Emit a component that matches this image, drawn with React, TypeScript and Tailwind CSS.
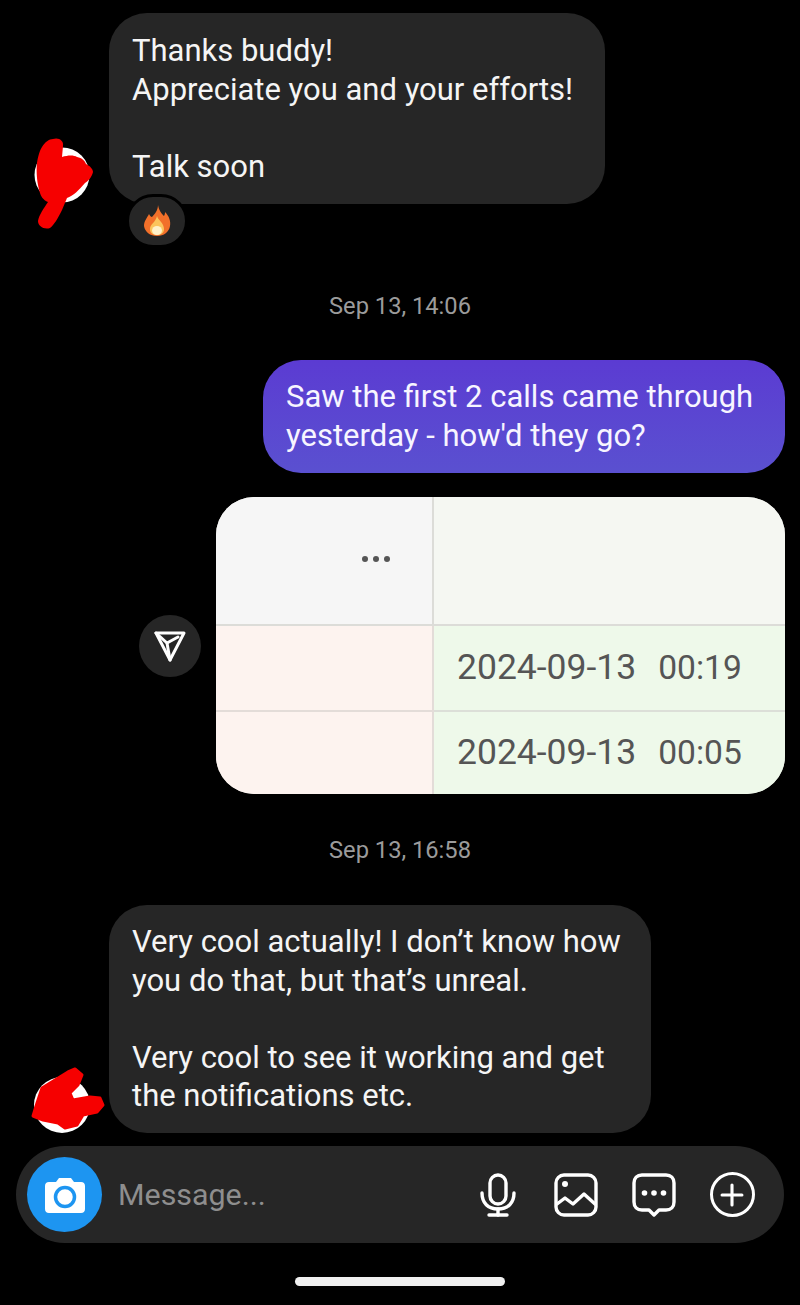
import { Plus } from 'lucide-react'

function ScribbleTop() {
  return (
    <svg width="66" height="100" viewBox="0 0 66 100" className="block">
      <circle cx="32" cy="45" r="27.5" fill="#fff" />
      <path
        d="M23 9 C29 7 34 11 33 16 L32 27 C38 25 44 25 47 27 C52 28 55 31 56 34 C60 36 63 39 63 42 C62 47 58 51 55 53 C49 60 43 66 37 68 L32 80 C28 88 24 95 20 98 C14 100 8 96 8 91 C9 85 14 78 18 72 C13 70 11 66 10 63 C7 54 6 42 7 33 C8 26 10 20 12 17 C15 12 19 9 23 9 Z"
        fill="#f60000"
      />
    </svg>
  )
}

function ScribbleBottom() {
  return (
    <svg width="76" height="74" viewBox="0 0 76 74" className="block">
      <circle cx="32" cy="40" r="28" fill="#fff" />
      <path
        d="M45 4 L52 10 L48 20 L40 28 L43 35 L60 32 L70 33 L73 40 L67 47 L53 50 L47 60 L35 63 L28 58 L13 55 L3 51 L7 38 L12 23 L25 15 L38 7 Z"
        fill="#f60000"
        stroke="#f60000"
        strokeWidth="3"
        strokeLinejoin="round"
      />
    </svg>
  )
}

function Flame() {
  return (
    <svg width="28" height="32" viewBox="0 0 28 32">
      <path d="M15 0 C16 6 19 9 21 11 C22 9 22 8 22 7 C26 11 28 16 27 21 C26 27 21 31 14 31 C7 31 2 27 1 21 C1 16 4 13 6 9 C7 11 8 12 9 12 C12 9 15 5 15 0 Z" fill="#f2702a" />
      <path d="M14 11 C15 15 21 18 21 24 C21 28 18 30 14 30 C10 30 7 28 7 24 C7 19 13 17 14 11 Z" fill="#fbc45c" />
      <ellipse cx="14" cy="25.5" rx="5" ry="4.5" fill="#fff1c9" />
    </svg>
  )
}

function Timestamp({ text }: { text: string }) {
  return <div className="text-center text-[23.7px] leading-[30px] text-[#9b9b9b]">{text}</div>
}

function App() {
  return (
    <div className="w-[800px] h-[1305px] overflow-hidden bg-black text-white font-['Roboto',sans-serif] flex flex-col pt-[13px]">
      {/* first message */}
      <div className="flex items-start pl-[30px] shrink-0">
        <div className="w-[79px] shrink-0 pt-[117px]">
          <ScribbleTop />
        </div>
        <div className="relative w-[496px] h-[191px] rounded-[38px] bg-[#262626] pl-[23px] pt-[19px] text-[31px] leading-[38.5px] text-[#f5f5f5]">
          Thanks buddy!
          <br />
          Appreciate you and your efforts!
          <br />
          <br />
          Talk soon
          <div className="absolute left-[17px] top-[181px] w-[62px] h-[54px] rounded-full bg-[#262626] border-[3px] border-black flex items-center justify-center">
            <Flame />
          </div>
        </div>
      </div>

      <div className="mt-[61px] shrink-0">
        <Timestamp text="Sep 13, 14:06" />
      </div>

      {/* sent message */}
      <div className="mt-[39px] flex justify-end pr-[15px] shrink-0">
        <div className="w-[522px] h-[113px] rounded-[38px] bg-gradient-to-b from-[#5b3bd2] to-[#5a50d0] pl-[23px] pt-[18px] text-[31px] leading-[38.5px] text-[#f7f5ff]">
          Saw the first 2 calls came through
          <br />
          yesterday - how'd they go?
        </div>
      </div>

      {/* shared screenshot */}
      <div className="mt-[24px] flex items-center justify-end pr-[15px] shrink-0">
        <div className="mr-[15px] w-[62px] h-[62px] rounded-full bg-[#262626] flex items-center justify-center">
          <svg width="32" height="32" viewBox="0 0 32 32" fill="none" stroke="#fff" strokeWidth="3" strokeLinejoin="round" strokeLinecap="round">
            <path d="M2 3 H30 L16 30 Z" />
            <path d="M2 3 L13 13 L16 30" />
            <path d="M13 13 L24 7" />
          </svg>
        </div>
        <div className="w-[569px] h-[297px] rounded-[38px] overflow-hidden grid grid-cols-[218px_351px] grid-rows-[129px_86px_82px] bg-[#d9d9d6]">
          <div className="bg-[#f6f6f6] border-r-[2px] border-b-[2px] border-[#dcdcd8] flex justify-end pr-[42px] pt-[59px]">
            <div className="flex gap-[5px] h-[6px]">
              <span className="w-[6px] h-[6px] rounded-full bg-[#555]" />
              <span className="w-[6px] h-[6px] rounded-full bg-[#555]" />
              <span className="w-[6px] h-[6px] rounded-full bg-[#555]" />
            </div>
          </div>
          <div className="bg-[#f5f7f2] border-b-[2px] border-[#dcdcd8]" />
          <div className="bg-[#fdf3ef] border-r-[2px] border-b-[2px] border-[#e3dcd8]" />
          <div className="bg-[#eef9ea] border-b-[2px] border-[#dcdfd8] flex items-center pl-[23px] text-[#555] gap-[22px]">
            <span className="text-[35.5px]">2024-09-13</span>
            <span className="text-[33.6px]">00:19</span>
          </div>
          <div className="bg-[#fdf3ef] border-r-[2px] border-[#e3dcd8]" />
          <div className="bg-[#eef9ea] flex items-center pl-[23px] text-[#555] gap-[22px]">
            <span className="text-[35.5px]">2024-09-13</span>
            <span className="text-[33.6px]">00:05</span>
          </div>
        </div>
      </div>

      <div className="mt-[41px] shrink-0">
        <Timestamp text="Sep 13, 16:58" />
      </div>

      {/* last message */}
      <div className="mt-[40px] flex items-end pl-[30px] shrink-0">
        <div className="w-[79px] shrink-0 mb-[-6px]">
          <ScribbleBottom />
        </div>
        <div className="w-[542px] h-[228px] rounded-[38px] bg-[#262626] pl-[23px] pt-[18px] text-[31px] leading-[38.5px] text-[#f5f5f5]">
          Very cool actually! I don’t know how
          <br />
          you do that, but that’s unreal.
          <br />
          <br />
          Very cool to see it working and get
          <br />
          the notifications etc.
        </div>
      </div>

      {/* composer */}
      <div className="mt-[13px] mx-[16px] h-[97px] shrink-0 rounded-full bg-[#262626] flex items-center pl-[11px] pr-[13px]">
        <div className="w-[75px] h-[75px] rounded-full bg-[#1d95f1] flex items-center justify-center">
          <svg width="40" height="36" viewBox="0 0 40 36">
            <path d="M4 5 H11 L14 1 H26 L29 5 H36 C38.5 5 40 6.5 40 9 V32 C40 34.5 38.5 36 36 36 H4 C1.5 36 0 34.5 0 32 V9 C0 6.5 1.5 5 4 5 Z" fill="#fff" />
            <circle cx="20" cy="20" r="9.5" fill="#fff" stroke="#1d95f1" strokeWidth="3.5" />
          </svg>
        </div>
        <div className="ml-[16px] text-[30.4px] text-[#8e8e8e] flex-1">Message...</div>
        <div className="flex items-center text-white">
          <div className="w-[78px] flex justify-center">
            <svg width="36" height="44" viewBox="0 0 36 44" fill="none" stroke="#fff" strokeWidth="3.4" strokeLinecap="round">
              <rect x="10" y="2" width="16" height="29" rx="8" />
              <path d="M2 20 C2 30 8 36 18 36 C28 36 34 30 34 20" />
              <path d="M18 36 V42" />
              <path d="M9 42 H27" />
            </svg>
          </div>
          <div className="w-[78px] flex justify-center">
            <svg width="44" height="44" viewBox="0 0 44 44" fill="none" stroke="#fff" strokeWidth="3.4" strokeLinejoin="round" strokeLinecap="round">
              <rect x="2" y="2" width="40" height="40" rx="8" />
              <circle cx="11" cy="11" r="3" fill="#fff" stroke="none" />
              <path d="M3 31 L11 25 L19 31 L30 21 L41 31" />
            </svg>
          </div>
          <div className="w-[78px] flex justify-center">
            <svg width="44" height="44" viewBox="0 0 44 44" fill="none" stroke="#fff" strokeWidth="3.4" strokeLinejoin="round">
              <path d="M10 2 H34 C39 2 42 5 42 10 V29 C42 34 39 37 34 37 H27 L22 42 L17 37 H10 C5 37 2 34 2 29 V10 C2 5 5 2 10 2 Z" />
              <circle cx="12.5" cy="20" r="2.8" fill="#fff" stroke="none" />
              <circle cx="22" cy="20" r="2.8" fill="#fff" stroke="none" />
              <circle cx="31.5" cy="20" r="2.8" fill="#fff" stroke="none" />
            </svg>
          </div>
          <div className="w-[78px] flex justify-center">
            <div className="w-[45px] h-[45px] rounded-full border-[3.4px] border-white flex items-center justify-center">
              <Plus size={34} strokeWidth={2.2} />
            </div>
          </div>
        </div>
      </div>

      {/* home indicator */}
      <div className="mt-[34px] flex justify-center shrink-0">
        <div className="w-[210px] h-[9px] rounded-full bg-[#f0f0f0]" />
      </div>
    </div>
  )
}

export default App
